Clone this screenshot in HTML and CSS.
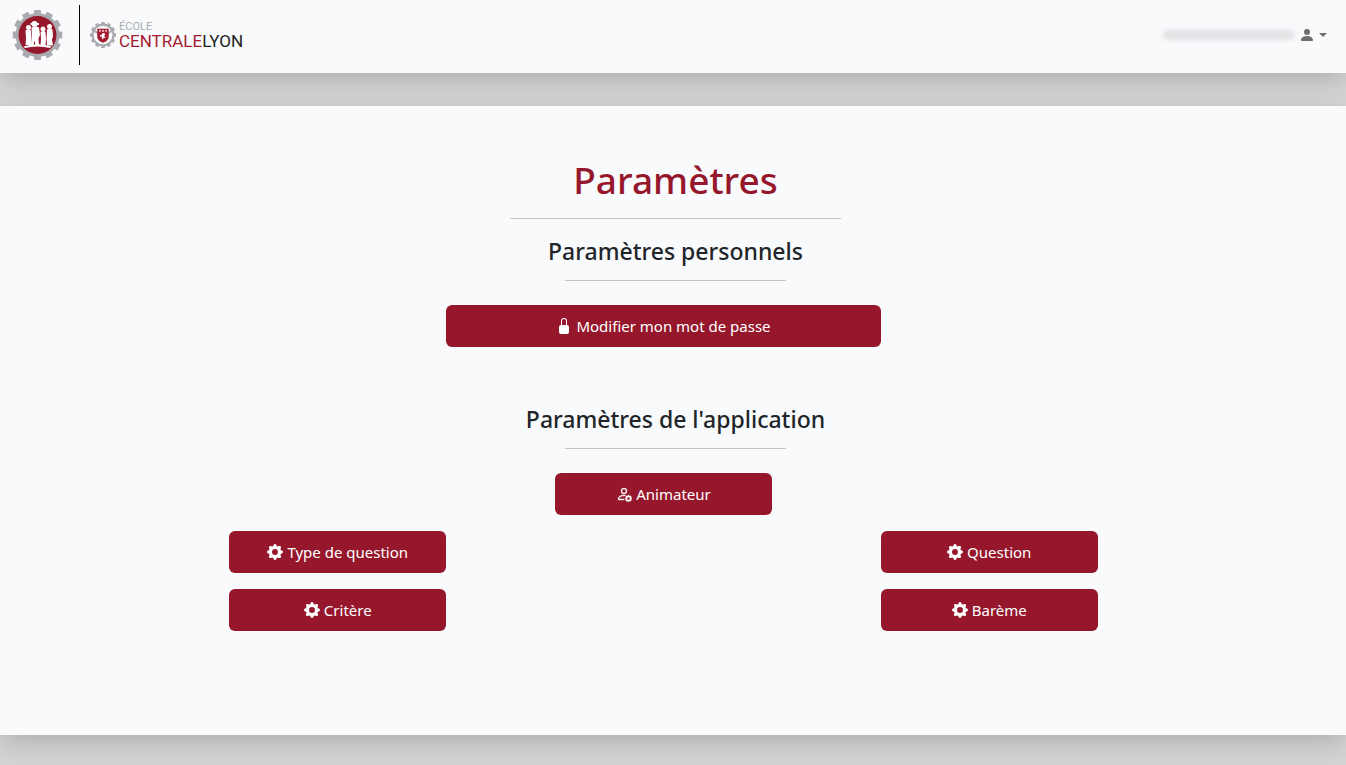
FILE: index.html
```html
<!DOCTYPE html>
<html lang="fr">
<head>
  <meta charset="UTF-8" />
  <meta name="viewport" content="width=device-width, initial-scale=1" />
  <title>Paramètres</title>
  <link rel="stylesheet" href="styles.css">
</head>
<body>
  <!-- Shared icons -->
  <svg class="sprite" aria-hidden="true">
    <symbol id="gear" viewBox="0 0 16 16">
      <path d="M9.405 1.05c-.413-1.4-2.397-1.4-2.81 0l-.1.34a1.464 1.464 0 0 1-2.105.872l-.31-.17c-1.283-.698-2.686.705-1.987 1.987l.169.311c.446.82.023 1.841-.872 2.105l-.34.1c-1.4.413-1.4 2.397 0 2.81l.34.1a1.464 1.464 0 0 1 .872 2.105l-.17.31c-.698 1.283.705 2.686 1.987 1.987l.311-.169a1.464 1.464 0 0 1 2.105.872l.1.34c.413 1.4 2.397 1.4 2.81 0l.1-.34a1.464 1.464 0 0 1 2.105-.872l.31.17c1.283.698 2.686-.705 1.987-1.987l-.169-.311a1.464 1.464 0 0 1 .872-2.105l.34-.1c1.4-.413 1.4-2.397 0-2.81l-.34-.1a1.464 1.464 0 0 1-.872-2.105l.17-.31c.698-1.283-.705-2.686-1.987-1.987l-.311.169a1.464 1.464 0 0 1-2.105-.872zM8 10.93a2.929 2.929 0 1 1 0-5.86 2.929 2.929 0 0 1 0 5.858z"/>
    </symbol>
    <symbol id="cog" viewBox="-50 -50 100 100">
      <g fill="#a9abae">
        <circle r="44"/>
        <rect x="-7" y="-50" width="14" height="100" rx="2"/>
        <rect x="-7" y="-50" width="14" height="100" rx="2" transform="rotate(30)"/>
        <rect x="-7" y="-50" width="14" height="100" rx="2" transform="rotate(60)"/>
        <rect x="-7" y="-50" width="14" height="100" rx="2" transform="rotate(90)"/>
        <rect x="-7" y="-50" width="14" height="100" rx="2" transform="rotate(120)"/>
        <rect x="-7" y="-50" width="14" height="100" rx="2" transform="rotate(150)"/>
      </g>
    </symbol>
  </svg>

  <header class="navbar">
    <a class="brand" href="#" aria-label="Accueil">
      <svg class="app-logo" viewBox="-50 -50 100 100">
        <use href="#cog" x="-50" y="-50" width="100" height="100"/>
        <circle r="38" fill="#96172b"/>
        <g fill="#fff">
          <circle cx="-18" cy="-15" r="5"/>
          <path d="M-24-9q6-4 11 0l1 15 1 14h-13l1-14z"/>
          <circle cx="-6" cy="-22" r="6"/>
          <path d="M-14-24h17v4h-17z"/>
          <path d="M-12-15q8-4 15 0l2 15-3 7 1 14h-7l-2-10-2 10h-4l1-18z"/>
          <circle cx="11" cy="-12" r="5"/>
          <path d="M6-6q6-4 10 0l1 14-1 13h-10l1-14z"/>
          <circle cx="24" cy="-17" r="5"/>
          <path d="M19-11q6-4 11 0l1 14-2 6 2 12h-12l-1-14z"/>
          <path d="M-28 23q28-9 56 0l-3 3q-25-6-50 0z"/>
        </g>
      </svg>
    </a>
    <a class="school" href="#">
      <svg class="school-logo" viewBox="-50 -50 100 100" aria-hidden="true">
        <use href="#cog" x="-50" y="-50" width="100" height="100"/>
        <circle r="36" fill="#f8fafc"/>
        <path d="M-34-20l16 10v8l-22-12zM34-20l-16 10v8l22-12z" fill="#a9abae"/>
        <path d="M-22-24h44v32q-2 16-22 22q-20-6-22-22z" fill="#a51c30"/>
        <path d="M-15-18h7v5h-7zM-4-18h8v5h-8zM8-18h7v5h-7zM-4-6l9-2 3 6-3 6 5 8-7-1-4 7-4-8 2-5-7 2-2-6 8-2z" fill="#fff"/>
      </svg>
      <span class="school-name">
        <span class="school-top">ÉCOLE</span>
        <span class="school-bottom"><span class="red">CENTRALE</span><span class="dark">LYON</span></span>
      </span>
    </a>
    <button class="user" type="button" aria-label="Mon compte">
      <span class="user-name"></span>
      <svg class="icon" viewBox="0 0 16 16"><path d="M3 14s-1 0-1-1 1-4 6-4 6 3 6 4-1 1-1 1zm5-6a3 3 0 1 0 0-6 3 3 0 0 0 0 6"/></svg>
      <span class="caret"></span>
    </button>
  </header>

  <main class="page">
    <div class="heading">
      <h1>Paramètres</h1>
      <hr>
      <h2>Paramètres personnels</h2>
      <hr class="short">
    </div>
    <div class="grid">
      <button class="btn wide" type="button">
        <svg class="icon" viewBox="0 0 16 16"><path d="M8 1a2 2 0 0 1 2 2v4H6V3a2 2 0 0 1 2-2m3 6V3a3 3 0 0 0-6 0v4a2 2 0 0 0-2 2v5a2 2 0 0 0 2 2h6a2 2 0 0 0 2-2V9a2 2 0 0 0-2-2"/></svg>
        Modifier mon mot de passe
      </button>
    </div>

    <div class="heading second">
      <h2>Paramètres de l'application</h2>
      <hr class="short">
    </div>
    <div class="grid">
      <button class="btn middle" type="button">
        <svg class="icon outline" viewBox="0 0 16 16"><path d="M11 5a3 3 0 1 1-6 0 3 3 0 0 1 6 0M8 7a2 2 0 1 0 0-4 2 2 0 0 0 0 4m.256 7a4.500 4.500 0 0 1-.229-1.004H3c.001-.246.154-.986.832-1.664C4.484 10.680 5.711 10 8 10q.390 0 .740.025c.226-.341.496-.650.804-.918Q8.844 9.002 8 9c-5 0-6 3-6 4s1 1 1 1zm3.630-4.540c.180-.613 1.048-.613 1.229 0l.043.148a.640.640 0 0 0 .921.382l.136-.074c.561-.306 1.175.308.870.869l-.075.136a.640.640 0 0 0 .382.920l.149.045c.612.180.612 1.048 0 1.229l-.150.043a.640.640 0 0 0-.380.921l.074.136c.305.561-.309 1.175-.870.870l-.136-.075a.640.640 0 0 0-.920.382l-.045.149c-.180.612-1.048.612-1.229 0l-.043-.150a.640.640 0 0 0-.921-.380l-.136.074c-.561.305-1.175-.309-.870-.870l.075-.136a.640.640 0 0 0-.382-.920l-.148-.044c-.613-.181-.613-1.049 0-1.229l.148-.043a.640.640 0 0 0 .382-.921l-.074-.136c-.306-.561.308-1.175.869-.870l.136.075a.640.640 0 0 0 .920-.382zM14 12.500a1.500 1.500 0 1 0-3 0 1.500 1.500 0 0 0 3 0"/></svg>
        Animateur
      </button>
      <button class="btn left" type="button"><svg class="icon"><use href="#gear"/></svg> Type de question</button>
      <button class="btn right" type="button"><svg class="icon"><use href="#gear"/></svg> Question</button>
      <button class="btn left" type="button"><svg class="icon"><use href="#gear"/></svg> Critère</button>
      <button class="btn right" type="button"><svg class="icon"><use href="#gear"/></svg> Barème</button>
    </div>
  </main>
</body>
</html>
```
FILE: styles.css
```css
body {
  margin: 0;
  background-color: #d3d3d3;
  color: #212529;
  font-family: "Segoe UI", "Noto Sans", "Open Sans", sans-serif;
  font-size: 15px;
  line-height: 24px;
}
.sprite {
  display: none;
}
.icon {
  width: 16px;
  height: 16px;
  fill: currentColor;
}
.outline {
  stroke: currentColor;
  stroke-width: 0.4;
}

/* Top bar */
.navbar {
  display: flex;
  align-items: center;
  padding: 5px 19px 8px 12px;
  background: #f8fafc;
  box-shadow: 0 8px 24px -2px rgba(0, 0, 0, 0.18);
}
.brand {
  display: flex;
  padding: 5px 16px 5px 0;
  border-right: 1px solid #000;
}
.app-logo {
  width: 51px;
  height: 50px;
}
.school {
  display: flex;
  align-items: center;
  gap: 3px;
  margin-left: 10px;
  text-decoration: none;
  font-family: Roboto, sans-serif;
}
.school-logo {
  width: 26px;
  height: 26px;
}
.school-name {
  display: flex;
  flex-direction: column;
}
.school-top {
  color: #a9abae;
  font-size: 11px;
  line-height: 12px;
}
.school-bottom {
  font-size: 17px;
  line-height: 16px;
}
.red {
  color: #a51c30;
}
.dark {
  color: #222;
}
.user {
  display: flex;
  align-items: center;
  gap: 4px;
  margin-left: auto;
  padding: 0;
  border: 0;
  background: none;
  color: #6d6d6e;
  cursor: pointer;
}
.user-name {
  width: 132px;
  height: 10px;
  border-radius: 5px;
  background: #e2e3e5;
  filter: blur(2px);
}
.caret {
  border: 4px solid transparent;
  border-top-color: currentColor;
  border-bottom: 0;
}

/* Page content */
.page {
  position: relative;
  margin: 33px 0 30px;
  padding: 50px 0 104px;
  background: #f8fafc;
  box-shadow: 0 8px 24px -2px rgba(0, 0, 0, 0.18);
}
.heading {
  padding: 0 9px 0 14px;
  text-align: center;
}
.second {
  margin-top: 56px;
}
h1, h2 {
  margin: 0;
  font-weight: 500;
}
h1 {
  color: #96172b;
  font-size: 37px;
  line-height: 48px;
}
h2 {
  font-size: 23px;
  line-height: 32px;
}
hr {
  width: 25%;
  height: 1px;
  margin: 14px auto 16px;
  border: 0;
  background: #c2c4c6;
}
.short {
  width: 16.6667%;
  margin: 13px auto 24px;
}

/* Buttons on a twelve column grid */
.grid {
  display: grid;
  grid-template-columns: repeat(12, 1fr);
  row-gap: 16px;
  margin: 0 31px 0 12px;
}
.btn {
  display: flex;
  align-items: center;
  justify-content: center;
  gap: 4px;
  height: 42px;
  padding: 0 12px;
  border: 0;
  border-radius: 6px;
  background: #96172b;
  color: #fff;
  font: inherit;
  cursor: pointer;
}
.btn:hover {
  background: #7d1324;
}
.wide {
  grid-column: 5 / span 4;
}
.middle {
  grid-column: 6 / span 2;
}
.left {
  grid-column: 3 / span 2;
}
.right {
  grid-column: 9 / span 2;
}
@media (max-width: 900px) {
  .wide, .middle, .left, .right {
    grid-column: 1 / -1;
  }
}
```
